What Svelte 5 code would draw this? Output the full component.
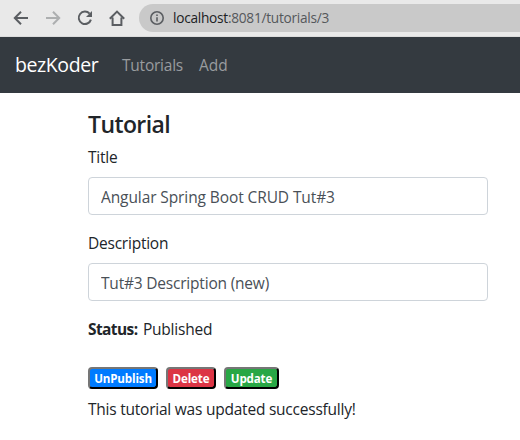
<script>
  let title = $state('Angular Spring Boot CRUD Tut#3');
  let description = $state('Tut#3 Description (new)');
</script>

<div class="page">
  <header class="chrome">
    <div class="tools">
      <svg width="16" height="16" viewBox="0 0 16 16"><path d="M15 8H2.2M8 1.8 1.8 8 8 14.2" /></svg>
      <svg class="off" width="16" height="16" viewBox="0 0 16 16"><path d="M1 8h12.8M8 1.8 14.2 8 8 14.2" /></svg>
      <svg width="16" height="16" viewBox="0 0 16 16"><path d="M12.6 3.7A6.2 6.2 0 1 0 13.9 9.6" /><path class="solid" d="M15 1v6H9z" /></svg>
      <svg class="home" width="16" height="16" viewBox="0 0 16 16"><path d="M.8 8.8 8 1.6l7.2 7.2M3.6 7.4V15h8.8V7.4" /></svg>
    </div>
    <div class="address">
      <svg width="14" height="14" viewBox="0 0 14 14"><circle cx="7" cy="7" r="6.2" /><path d="M7 6.2v4.3M7 3.4v1.5" /></svg>
      <span class="url"><b>localhost</b>:8081/tutorials/3</span>
    </div>
  </header>
  <nav>
    <a class="brand" href="#home">bezKoder</a>
    <a class="link first" href="#tutorials">Tutorials</a>
    <a class="link add" href="#add">Add</a>
  </nav>
  <main>
    <h4>Tutorial</h4>
    <div class="group">
      <label class="l1" for="title">Title</label>
      <input id="title" class="i1" bind:value={title} />
    </div>
    <div class="group">
      <label class="l2" for="description">Description</label>
      <input id="description" class="i2" bind:value={description} />
    </div>
    <div class="status"><strong>Status:</strong><span>Published</span></div>
    <div class="actions">
      <button class="primary">UnPublish</button>
      <button class="danger">Delete</button>
      <button class="success">Update</button>
    </div>
    <p>This tutorial was updated successfully!</p>
  </main>
</div>

<style>
  .page {
    height: 440px;
    overflow: hidden;
    background: #fff;
    color: #212529;
    font: 15.5px/24px 'Open Sans', 'Noto Sans', sans-serif;
    letter-spacing: -0.23px;
    white-space: nowrap;
  }
  .page * { box-sizing: border-box; }
  .chrome {
    height: 37px;
    display: flex;
    align-items: center;
    background: #e9e9e9;
    border-bottom: 1px solid #dcdcdc;
    overflow: hidden;
  }
  .tools {
    display: flex;
    gap: 16px;
    padding-left: 13px;
    width: 139px;
    flex: none;
  }
  svg { fill: none; stroke: #5b5e62; stroke-width: 2; flex: none; display: block; }
  .off { stroke: #adafb0; }
  .solid { fill: #5b5e62; stroke: none; }
  .address {
    height: 28px;
    flex: none;
    width: 400px;
    display: flex;
    align-items: center;
    padding-left: 11px;
    gap: 9px;
    border-radius: 14px;
    background: #c9c9c9;
  }
  .address svg { stroke-width: 1.6; }
  .url { font-size: 13.7px; color: #55585b; line-height: 20px; letter-spacing: -0.27px; }
  .url b { font-weight: 400; color: #202124; }
  nav {
    height: 56px;
    display: flex;
    align-items: center;
    padding-left: 15px;
    background: #343a40;
  }
  nav a { text-decoration: none; }
  .brand { width: 107px; color: #fff; font-size: 19.5px; letter-spacing: -0.4px; }
  .link { color: #999c9f; }
  .first { width: 77px; }
  .add { letter-spacing: 0; }
  main { width: 400px; margin-left: 88px; padding-top: 17px; }
  h4 { margin: 0 0 6px; font-size: 23px; line-height: 29px; font-weight: 600; letter-spacing: -0.6px; }
  .group { margin-bottom: 16px; }
  label { display: block; margin-bottom: 8px; }
  input {
    display: block;
    width: 400px;
    height: 38px;
    padding: 7px 12px 5px;
    border: 1px solid #ced4da;
    border-radius: 4px;
    background: #fff;
    color: #495057;
    font: inherit;
    letter-spacing: -0.2px;
  }
  .i1 { letter-spacing: -0.1px; }
  .status { display: flex; gap: 5px; margin-bottom: 26px; }
  .status strong { width: 50px; letter-spacing: -0.6px; }
  .actions { display: flex; gap: 8px; }
  button {
    height: 22px;
    padding: 1px 0 0;
    border: 2px outset #212529;
    border-color: #767676 #212529 #212529 #767676;
    border-radius: 4px;
    color: #fff;
    font: 700 11.6px/16px 'Open Sans', 'Noto Sans', sans-serif;
    letter-spacing: -0.15px;
  }
  .primary { width: 70px; background: #007bff; }
  .danger { width: 50px; background: #dc3545; }
  .success { width: 55px; background: #28a745; }
  p { margin: 8px 0 0; }
</style>
